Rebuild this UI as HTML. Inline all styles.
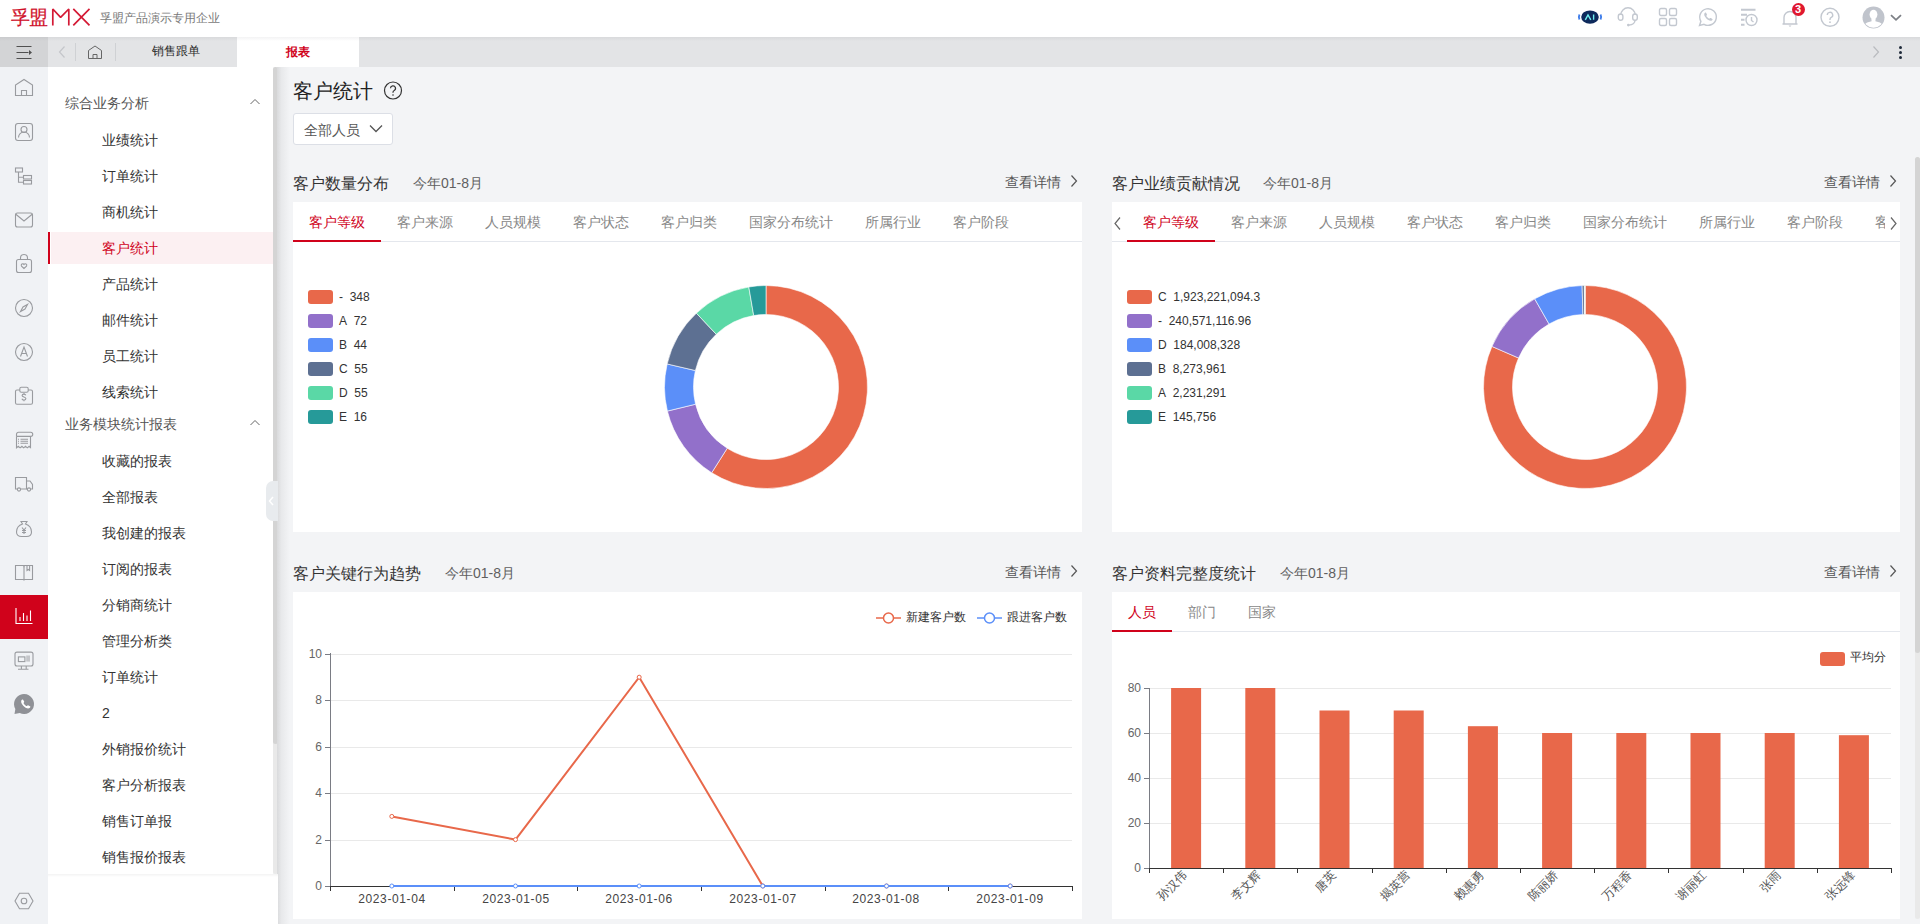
<!DOCTYPE html><html><head><meta charset="utf-8"><style>
*{box-sizing:border-box;margin:0;padding:0}
html,body{width:1920px;height:924px;overflow:hidden}
body{position:relative;background:#f3f4f6;font-family:"Liberation Sans",sans-serif;color:#333;font-size:14px}
.a{position:absolute}
.t{position:absolute;white-space:nowrap;line-height:1}
svg{position:absolute;overflow:visible}
</style></head><body><div class="a" style="left:0px;top:0px;width:1920px;height:37px;background:#fff"></div>
<div class="t" style="left:11px;top:8px;font-size:19px;color:#d0112b;letter-spacing:-1px;-webkit-text-stroke:0.2px #d0112b">孚盟</div>
<svg style="left:50px;top:8px" width="42" height="19" viewBox="0 0 42 19"><path d="M2.8 17.6V1L10.6 9.4L18.8 1V17.6" fill="none" stroke="#d41a35" stroke-width="1.7" stroke-linejoin="bevel"/><path d="M23.3 0.8L39.5 17.4M39.5 0.8L23.3 17.4" fill="none" stroke="#d41a35" stroke-width="1.7"/></svg>
<div class="t" style="left:100px;top:12px;font-size:12px;color:#7a7a7a;">孚盟产品演示专用企业</div>
<svg style="left:1577px;top:9px" width="26" height="16" viewBox="0 0 26 16"><ellipse cx="13" cy="8.1" rx="8.8" ry="6.7" fill="#0e2a5c"/><path d="M2.5 5.5Q1.200 8 2.500 10.500M23.500 5.500Q24.800 8 23.500 10.500" stroke="#3b7bea" stroke-width="1.8" fill="none"/><path d="M8.300 10.800L11 6L13.800 10.800M16.600 5.600V10.800" stroke="#6ff0f0" stroke-width="1.4" fill="none"/></svg>
<svg style="left:1617px;top:6px" width="22" height="22" viewBox="0 0 22 22"><path d="M3.800 9a7.200 7.200 0 0 1 14.400 0" fill="none" stroke="#c3c8d0" stroke-width="1.4"/><rect x="1.300" y="8" width="4.600" height="6.200" rx="2.200" fill="none" stroke="#c3c8d0" stroke-width="1.4"/><rect x="15.700" y="8" width="4.600" height="6.200" rx="2.200" fill="none" stroke="#c3c8d0" stroke-width="1.4"/><path d="M18 14.200q0 4.300-6.300 4.900" fill="none" stroke="#c3c8d0" stroke-width="1.4"/><circle cx="11.300" cy="19.100" r="1.300" fill="#c3c8d0"/></svg>
<svg style="left:1658px;top:7px" width="20" height="20" viewBox="0 0 20 20"><g fill="none" stroke="#c3c8d0" stroke-width="1.4"><rect x="1.5" y="1.5" width="7" height="7" rx="1.5"/><rect x="11.5" y="1.5" width="7" height="7" rx="1.5"/><rect x="1.5" y="11.5" width="7" height="7" rx="1.5"/><rect x="11.5" y="11.5" width="7" height="7" rx="1.5"/></g></svg>
<svg style="left:1698px;top:7px" width="20" height="20" viewBox="0 0 20 20"><path d="M1.5 18.5l1.4-4.2A8.3 8.3 0 1 1 6 17.3z" fill="none" stroke="#c3c8d0" stroke-width="1.4"/><path d="M6.5 6.3c.4-.9 1.1-1 1.5-.5l.9 1.5c.2.4 0 .8-.3 1.1-.4.3-.3.7 0 1.1.6.8 1.3 1.5 2.2 2 .4.2.7.2 1-.2.3-.4.7-.5 1.1-.3l1.4.9c.5.3.4 1-.4 1.5-1 .6-2.3.4-3.6-.4-1.6-1-2.900-2.5-3.700-4-.4-.9-.5-1.900-.1-2.700z" fill="#c3c8d0"/></svg>
<svg style="left:1740px;top:8px" width="19" height="19" viewBox="0 0 19 19"><g stroke="#c3c8d0" stroke-width="1.4" fill="none"><path d="M1 1.800H15.500M1 6.800H7M1 11.800H4.500M1 16.800H4.500" stroke-width="1.9"/><circle cx="11.5" cy="12" r="5.5"/><path d="M11.5 9V12.5L13.5 14"/></g></svg>
<svg style="left:1781px;top:8px" width="19" height="20" viewBox="0 0 19 20"><path d="M3 15.5V9.5a6 6 0 0 1 12 0v6M1.5 16H16.5" fill="none" stroke="#c3c8d0" stroke-width="1.4"/><path d="M7.5 17.5h3l-1.5 1.6z" fill="#c3c8d0"/></svg>
<div class="a" style="left:1791.5px;top:2.5px;width:13px;height:13px;border-radius:7px;background:#e0182f;color:#fff;font-size:11px;line-height:13px;text-align:center;font-weight:bold">3</div>
<svg style="left:1820px;top:7px" width="20" height="20" viewBox="0 0 20 20"><circle cx="10" cy="10.3" r="9" fill="none" stroke="#c3c8d0" stroke-width="1.4"/><path d="M7.3 8a2.7 2.7 0 1 1 4 2.4c-.9.5-1.3 1-1.3 2v.6" fill="none" stroke="#c3c8d0" stroke-width="1.4"/><circle cx="10" cy="15.2" r=".9" fill="#c3c8d0"/></svg>
<svg style="left:1861.5px;top:5.5px" width="23" height="23" viewBox="0 0 23 23"><defs><clipPath id="avc"><circle cx="11.5" cy="11.5" r="10.3"/></clipPath></defs><circle cx="11.5" cy="11.5" r="11" fill="#c0c4cc"/><g clip-path="url(#avc)" fill="#fff"><ellipse cx="11.5" cy="8.6" rx="3.9" ry="4.8"/><path d="M9.300 12.500L9.600 15.300Q4.500 16.300 2 18.500V24H21V18.500Q18.500 16.300 13.400 15.300L13.700 12.500Z"/></g></svg>
<svg style="left:1890px;top:14px" width="12" height="8" viewBox="0 0 12 8"><path d="M1 1.200L6 5.800L11 1.200" fill="none" stroke="#7d8086" stroke-width="1.8"/></svg>
<div class="a" style="left:0px;top:37px;width:1920px;height:30px;background:linear-gradient(#d9dadc,#e3e4e6 4px)"></div>
<div class="a" style="left:0px;top:37px;width:48px;height:30px;background:linear-gradient(#cacbcd,#d3d4d6 4px)"></div>
<svg style="left:15px;top:45px" width="18" height="14" viewBox="0 0 18 14"><path d="M1.5 1.5H16.5M1.5 7.5H13.5M1.5 13.5H16.5" stroke="#505050" stroke-width="1" fill="none"/><path d="M14 5L17 7.5L14 10z" fill="#505050"/></svg>
<svg style="left:58px;top:45px" width="8" height="14" viewBox="0 0 8 14"><path d="M6.5 1.5L1.5 7L6.5 12.5" stroke="#c4c6ca" stroke-width="1.2" fill="none"/></svg>
<div class="a" style="left:75px;top:43px;width:1px;height:18px;background:#cfd1d4"></div>
<svg style="left:87px;top:45px" width="16" height="15" viewBox="0 0 16 15"><path d="M1.5 13.5V5.5L8 1L14.5 5.5V13.5H1.5z" stroke="#666" stroke-width="1" fill="none"/><path d="M6 13.5V9.5H10V13.5" stroke="#666" stroke-width="1" fill="none"/></svg>
<div class="a" style="left:115px;top:43px;width:1px;height:18px;background:#cfd1d4"></div>
<div class="t" style="left:152px;top:45px;font-size:12px;color:#2a2a2a;font-weight:500">销售跟单</div>
<div class="a" style="left:237px;top:37px;width:122px;height:30px;background:linear-gradient(#f3f3f4,#fff 4px)"></div>
<div class="t" style="left:286px;top:46px;font-size:12px;color:#d0021b;font-weight:bold">报表</div>
<svg style="left:1872px;top:45px" width="8" height="14" viewBox="0 0 8 14"><path d="M1.5 1.5L6.5 7L1.5 12.5" stroke="#b9bbbf" stroke-width="1.2" fill="none"/></svg>
<div class="a" style="left:1899px;top:46px;width:3px;height:3px;background:#1f2a3a;border-radius:2px"></div>
<div class="a" style="left:1899px;top:51px;width:3px;height:3px;background:#1f2a3a;border-radius:2px"></div>
<div class="a" style="left:1899px;top:56px;width:3px;height:3px;background:#1f2a3a;border-radius:2px"></div>
<div class="a" style="left:0px;top:67px;width:48px;height:857px;background:#f0f2f5"></div>
<div class="a" style="left:0px;top:595px;width:48px;height:44px;background:#d0021b"></div>
<svg style="left:14px;top:78px" width="20" height="20" viewBox="0 0 20 20"><g fill="none" stroke="#999b9f" stroke-width="1.1"><path d="M1.5 17.5V7L10 1.5L18.5 7V17.5Z"/><path d="M7.5 17.5V12.5H12.5V17.5"/></g></svg>
<svg style="left:14px;top:122px" width="20" height="20" viewBox="0 0 20 20"><g fill="none" stroke="#999b9f" stroke-width="1.1"><rect x="1.5" y="1.5" width="17" height="17" rx="2.5"/><circle cx="10" cy="7.5" r="3"/><path d="M4.5 15.5a5.5 5.5 0 0 1 11 0"/></g></svg>
<svg style="left:14px;top:166px" width="20" height="20" viewBox="0 0 20 20"><g fill="none" stroke="#999b9f" stroke-width="1.1"><rect x="1.5" y="2" width="7" height="4"/><rect x="9.5" y="9.5" width="8" height="3.5"/><rect x="9.5" y="14.5" width="8" height="3.5"/><path d="M4.5 6V16.3H9.5M4.5 11.3H9.5"/></g></svg>
<svg style="left:14px;top:210px" width="20" height="20" viewBox="0 0 20 20"><g fill="none" stroke="#999b9f" stroke-width="1.1"><rect x="1.5" y="3" width="17" height="14" rx="2"/><path d="M1.5 4L10 11L18.5 4"/></g></svg>
<svg style="left:14px;top:254px" width="20" height="20" viewBox="0 0 20 20"><g fill="none" stroke="#999b9f" stroke-width="1.1"><rect x="2.5" y="5.5" width="15" height="13" rx="2"/><path d="M6.5 5.5V4a3.5 3.5 0 0 1 7 0v1.5"/><path d="M10 14.5l-2.5-2.400a1.400 1.400 0 0 1 2.500-1.600a1.400 1.400 0 0 1 2.500 1.600z"/></g></svg>
<svg style="left:14px;top:298px" width="20" height="20" viewBox="0 0 20 20"><g fill="none" stroke="#999b9f" stroke-width="1.1"><circle cx="10" cy="10" r="8.5"/><path d="M13.5 6.5L11 11L6.5 13.5L9 9z"/></g></svg>
<svg style="left:14px;top:342px" width="20" height="20" viewBox="0 0 20 20"><g fill="none" stroke="#999b9f" stroke-width="1.1"><circle cx="10" cy="10" r="8.5"/><path d="M6.5 14.5L10 5L13.5 14.5M7.700 11.500H12.300"/></g></svg>
<svg style="left:14px;top:386px" width="20" height="20" viewBox="0 0 20 20"><g fill="none" stroke="#999b9f" stroke-width="1.1"><rect x="1.5" y="4" width="17" height="14.3" rx="1.5"/><rect x="5.8" y="1.3" width="8.4" height="5" rx="1.5" fill="#f0f2f5"/><path d="M11.800 9.300c-.3-.8-1-1.200-1.900-1.200-1.100 0-1.800.6-1.800 1.400 0 1.800 3.800 1.100 3.800 3.100 0 .9-.8 1.500-1.900 1.500-1 0-1.800-.5-2.100-1.300M10 7V8.200M10 14.100V15.300"/></g></svg>
<svg style="left:14px;top:430px" width="20" height="20" viewBox="0 0 20 20"><g fill="none" stroke="#999b9f" stroke-width="1.1"><path d="M2.500 6.400V17.800L4.300 16.300L6.100 17.800L7.900 16.300L9.700 17.800L11.500 16.300L13.300 17.800L15.100 16.300L16.500 17.500V6.400"/><path d="M2.500 6.400V4.300a2 2 0 0 1 2-2H16.700a2 2 0 0 1 0 4.100H2.500"/><path d="M6.500 9.200H14M6.500 11.200H14M6.500 13.300H14M4 9.200H5M4 11.200H5M4 13.300H5"/></g></svg>
<svg style="left:14px;top:474px" width="20" height="20" viewBox="0 0 20 20"><g fill="none" stroke="#999b9f" stroke-width="1.1"><path d="M1.5 3.5H12.5V15H1.5z"/><path d="M12.5 7H16l2.5 3.5V15H12.5"/><circle cx="5" cy="15.5" r="1.6" fill="#f0f2f5"/><circle cx="15" cy="15.5" r="1.6" fill="#f0f2f5"/></g></svg>
<svg style="left:14px;top:518px" width="20" height="20" viewBox="0 0 20 20"><g fill="none" stroke="#999b9f" stroke-width="1.1"><path d="M7 3.5h6l-1.500 2.500c3.500 1.200 6 4.500 6 8 0 3-2 4.500-5 4.500H7.500C4.500 18.500 2.500 17 2.500 14c0-3.500 2.500-6.800 6-8z"/><path d="M8 9.500L10 12L12 9.500M10 12V16M8 12.500H12M8 14.500H12"/></g></svg>
<svg style="left:14px;top:562px" width="20" height="20" viewBox="0 0 20 20"><g fill="none" stroke="#999b9f" stroke-width="1.1"><path d="M1.500 3.500H9.500L10 4.500L10.500 3.500H18.500V17.500H10.500L10 18L9.500 17.500H1.500z"/><path d="M10 4.500V17.500"/><path d="M13 3.500V8.500L14.300 7.500L15.600 8.500V3.500"/></g></svg>
<svg style="left:14px;top:606px" width="20" height="20" viewBox="0 0 20 20"><g fill="none" stroke="#fff" stroke-width="1.1"><path d="M2 2V17.5H18.5"/><path d="M6 15V11M9.5 15V7M13 15V9.5M16.500 15V4.500"/></g></svg>
<svg style="left:14px;top:650px" width="20" height="20" viewBox="0 0 20 20"><g fill="none" stroke="#999b9f" stroke-width="1.1"><rect x="1" y="2.100" width="18" height="13.900" rx="2"/><rect x="4.400" y="6.900" width="6.500" height="4.700"/><path d="M7.400 16V19M12.200 16V19M4 19.300H14.500"/><rect x="12.200" y="5.500" width="3.800" height="6.100" fill="#c4c5c9" stroke="none"/></g></svg>
<svg style="left:14px;top:694px" width="21" height="21" viewBox="0 0 21 21"><path d="M5.770 19.060A10 10 0 1 0 1.340 15L0.500 20z" fill="#8f9196"/><g transform="translate(0.6 0.4) scale(1.05)"><path d="M6.500 5.500c.5-.8 1.200-.9 1.600-.4l1 1.600c.2.400 0 .8-.3 1.100-.4.300-.3.700 0 1.100.6.800 1.400 1.600 2.300 2.100.4.200.7.200 1-.2.300-.4.700-.5 1.100-.3l1.500.9c.5.300.4 1.100-.4 1.600-1 .6-2.400.4-3.800-.4-1.700-1-3-2.600-3.900-4.200-.4-.9-.5-2-.1-2.800z" fill="#fff"/></g></svg>
<svg style="left:14px;top:891px" width="20" height="20" viewBox="0 0 20 20"><g fill="none" stroke="#999b9f" stroke-width="1.1"><path d="M5.500 2.200H14.500L19 10L14.500 17.800H5.500L1 10z"/><circle cx="10" cy="10" r="2.800"/></g></svg>
<div class="a" style="left:48px;top:67px;width:225px;height:857px;background:#fff"></div>
<div class="a" style="left:273px;top:67px;width:5px;height:807px;background:#e9e9e9;border-radius:3px"></div>
<div class="a" style="left:273px;top:67px;width:5px;height:677px;background:#d4d4d4;border-radius:3px"></div>
<div class="a" style="left:277px;top:67px;width:13px;height:857px;background:linear-gradient(90deg,#d9dadc 0,#e8e9eb 35%,#f3f4f6 100%)"></div>
<div class="a" style="left:48px;top:874px;width:230px;height:50px;background:linear-gradient(#f3f3f3,#fff 3px)"></div>
<div class="a" style="left:51px;top:232px;width:222px;height:32px;background:#fcf0f2"></div>
<div class="a" style="left:48px;top:232px;width:2px;height:32px;background:#d0021b"></div>
<div class="t" style="left:65px;top:96px;font-size:14px;color:#555;">综合业务分析</div>
<svg style="left:249px;top:98px" width="12" height="7" viewBox="0 0 12 7"><path d="M1.5 6L6 1.5L10.5 6" stroke="#666" stroke-width="1" fill="none"/></svg>
<div class="t" style="left:102px;top:133px;font-size:14px;color:#333;">业绩统计</div>
<div class="t" style="left:102px;top:169px;font-size:14px;color:#333;">订单统计</div>
<div class="t" style="left:102px;top:205px;font-size:14px;color:#333;">商机统计</div>
<div class="t" style="left:102px;top:241px;font-size:14px;color:#d0021b;">客户统计</div>
<div class="t" style="left:102px;top:277px;font-size:14px;color:#333;">产品统计</div>
<div class="t" style="left:102px;top:313px;font-size:14px;color:#333;">邮件统计</div>
<div class="t" style="left:102px;top:349px;font-size:14px;color:#333;">员工统计</div>
<div class="t" style="left:102px;top:385px;font-size:14px;color:#333;">线索统计</div>
<div class="t" style="left:65px;top:417px;font-size:14px;color:#555;">业务模块统计报表</div>
<svg style="left:249px;top:419px" width="12" height="7" viewBox="0 0 12 7"><path d="M1.5 6L6 1.5L10.5 6" stroke="#666" stroke-width="1" fill="none"/></svg>
<div class="t" style="left:102px;top:454px;font-size:14px;color:#333;">收藏的报表</div>
<div class="t" style="left:102px;top:490px;font-size:14px;color:#333;">全部报表</div>
<div class="t" style="left:102px;top:526px;font-size:14px;color:#333;">我创建的报表</div>
<div class="t" style="left:102px;top:562px;font-size:14px;color:#333;">订阅的报表</div>
<div class="t" style="left:102px;top:598px;font-size:14px;color:#333;">分销商统计</div>
<div class="t" style="left:102px;top:634px;font-size:14px;color:#333;">管理分析类</div>
<div class="t" style="left:102px;top:670px;font-size:14px;color:#333;">订单统计</div>
<div class="t" style="left:102px;top:706px;font-size:14px;color:#333;">2</div>
<div class="t" style="left:102px;top:742px;font-size:14px;color:#333;">外销报价统计</div>
<div class="t" style="left:102px;top:778px;font-size:14px;color:#333;">客户分析报表</div>
<div class="t" style="left:102px;top:814px;font-size:14px;color:#333;">销售订单报</div>
<div class="t" style="left:102px;top:850px;font-size:14px;color:#333;">销售报价报表</div>
<div class="a" style="left:266px;top:481px;width:12px;height:40px;background:#e8ebee;border-radius:7px 0 0 7px"></div>
<svg style="left:268px;top:496px" width="6" height="10" viewBox="0 0 6 10"><path d="M5 1L1.500 5L5 9" stroke="#fff" stroke-width="1.5" fill="none"/></svg>
<div class="a" style="left:1915px;top:157px;width:5px;height:762px;background:#e9e9e9;border-radius:3px"></div>
<div class="a" style="left:1915px;top:157px;width:5px;height:496px;background:#d4d4d4;border-radius:3px"></div>
<div class="t" style="left:293px;top:81px;font-size:20px;color:#222;">客户统计</div>
<svg style="left:383px;top:81px" width="20" height="20" viewBox="0 0 20 20"><circle cx="10" cy="9.5" r="8.5" fill="none" stroke="#333" stroke-width="1.2"/><path d="M7.500 7.300a2.500 2.500 0 1 1 3.700 2.200c-.8.4-1.200.9-1.200 1.800v.5" fill="none" stroke="#333" stroke-width="1.2"/><circle cx="10" cy="14" r=".8" fill="#333"/></svg>
<div class="a" style="left:293px;top:113px;width:100px;height:32px;background:#fff;border:1px solid #dcdfe6;border-radius:3px"></div>
<div class="t" style="left:304px;top:123px;font-size:14px;color:#555;">全部人员</div>
<svg style="left:369px;top:124px" width="14" height="9" viewBox="0 0 14 9"><path d="M1 1.500L7 7.500L13 1.500" stroke="#555" stroke-width="1.3" fill="none"/></svg>
<div class="t" style="left:293px;top:176px;font-size:16px;color:#333;">客户数量分布</div>
<div class="t" style="left:413px;top:176px;font-size:14px;color:#5f5f5f;">今年01-8月</div>
<div class="t" style="left:1005px;top:175px;font-size:14px;color:#555;">查看详情</div>
<svg style="left:1070px;top:174px" width="8" height="14" viewBox="0 0 8 14"><path d="M1.500 1.500L6.500 7L1.500 12.500" stroke="#555" stroke-width="1.2" fill="none"/></svg>
<div class="t" style="left:1112px;top:176px;font-size:16px;color:#333;">客户业绩贡献情况</div>
<div class="t" style="left:1263px;top:176px;font-size:14px;color:#5f5f5f;">今年01-8月</div>
<div class="t" style="left:1824px;top:175px;font-size:14px;color:#555;">查看详情</div>
<svg style="left:1889px;top:174px" width="8" height="14" viewBox="0 0 8 14"><path d="M1.500 1.500L6.500 7L1.500 12.500" stroke="#555" stroke-width="1.2" fill="none"/></svg>
<div class="t" style="left:293px;top:566px;font-size:16px;color:#333;">客户关键行为趋势</div>
<div class="t" style="left:445px;top:566px;font-size:14px;color:#5f5f5f;">今年01-8月</div>
<div class="t" style="left:1005px;top:565px;font-size:14px;color:#555;">查看详情</div>
<svg style="left:1070px;top:564px" width="8" height="14" viewBox="0 0 8 14"><path d="M1.500 1.500L6.500 7L1.500 12.500" stroke="#555" stroke-width="1.2" fill="none"/></svg>
<div class="t" style="left:1112px;top:566px;font-size:16px;color:#333;">客户资料完整度统计</div>
<div class="t" style="left:1280px;top:566px;font-size:14px;color:#5f5f5f;">今年01-8月</div>
<div class="t" style="left:1824px;top:565px;font-size:14px;color:#555;">查看详情</div>
<svg style="left:1889px;top:564px" width="8" height="14" viewBox="0 0 8 14"><path d="M1.500 1.500L6.500 7L1.500 12.500" stroke="#555" stroke-width="1.2" fill="none"/></svg>
<div class="a" style="left:293px;top:202px;width:789px;height:330px;background:#fff"></div>
<div class="a" style="left:1112px;top:202px;width:788px;height:330px;background:#fff"></div>
<div class="a" style="left:293px;top:592px;width:789px;height:327px;background:#fff"></div>
<div class="a" style="left:1112px;top:592px;width:788px;height:327px;background:#fff"></div>
<div class="a" style="left:293px;top:241px;width:789px;height:1px;background:#e4e7ed"></div>
<div class="t" style="left:309px;top:215px;font-size:14px;color:#d0021b;">客户等级</div>
<div class="a" style="left:293px;top:240px;width:88px;height:2px;background:#d0021b"></div>
<div class="t" style="left:397px;top:215px;font-size:14px;color:#888;">客户来源</div>
<div class="t" style="left:485px;top:215px;font-size:14px;color:#888;">人员规模</div>
<div class="t" style="left:573px;top:215px;font-size:14px;color:#888;">客户状态</div>
<div class="t" style="left:661px;top:215px;font-size:14px;color:#888;">客户归类</div>
<div class="t" style="left:749px;top:215px;font-size:14px;color:#888;">国家分布统计</div>
<div class="t" style="left:865px;top:215px;font-size:14px;color:#888;">所属行业</div>
<div class="t" style="left:953px;top:215px;font-size:14px;color:#888;">客户阶段</div>
<div class="a" style="left:1127px;top:202px;width:758px;height:40px;overflow:hidden">
<div class="t" style="left:16px;top:13px;font-size:14px;color:#d0021b">客户等级</div>
<div class="a" style="left:0px;top:38px;width:88px;height:2px;background:#d0021b"></div>
<div class="t" style="left:104px;top:13px;font-size:14px;color:#888">客户来源</div>
<div class="t" style="left:192px;top:13px;font-size:14px;color:#888">人员规模</div>
<div class="t" style="left:280px;top:13px;font-size:14px;color:#888">客户状态</div>
<div class="t" style="left:368px;top:13px;font-size:14px;color:#888">客户归类</div>
<div class="t" style="left:456px;top:13px;font-size:14px;color:#888">国家分布统计</div>
<div class="t" style="left:572px;top:13px;font-size:14px;color:#888">所属行业</div>
<div class="t" style="left:660px;top:13px;font-size:14px;color:#888">客户阶段</div>
<div class="t" style="left:748px;top:13px;font-size:14px;color:#888">客户类型</div>
</div>
<div class="a" style="left:1112px;top:241px;width:788px;height:1px;background:#e4e7ed"></div>
<div class="a" style="left:1127px;top:240px;width:88px;height:2px;background:#d0021b"></div>
<svg style="left:1113px;top:216px" width="9" height="15" viewBox="0 0 9 15"><path d="M7 1.500L2 7.500L7 13.500" stroke="#666" stroke-width="1.2" fill="none"/></svg>
<svg style="left:1889px;top:216px" width="9" height="15" viewBox="0 0 9 15"><path d="M2 1.500L7 7.500L2 13.500" stroke="#666" stroke-width="1.2" fill="none"/></svg>
<div class="a" style="left:1112px;top:631px;width:788px;height:1px;background:#e4e7ed"></div>
<div class="t" style="left:1128px;top:605px;font-size:14px;color:#d0021b;">人员</div>
<div class="a" style="left:1112px;top:630px;width:60px;height:2px;background:#d0021b"></div>
<div class="t" style="left:1188px;top:605px;font-size:14px;color:#888;">部门</div>
<div class="t" style="left:1248px;top:605px;font-size:14px;color:#888;">国家</div>
<svg style="left:0;top:0" width="1920" height="924"><path d="M766.00 285.50A101.5 101.5 0 1 1 711.70 472.76L727.22 448.26A72.5 72.5 0 1 0 766.00 314.50Z" fill="#e8684a" stroke="#fff" stroke-width="0.6" stroke-linejoin="round"/><path d="M711.70 472.76A101.5 101.5 0 0 1 667.40 411.09L695.57 404.21A72.5 72.5 0 0 0 727.22 448.26Z" fill="#9270ca" stroke="#fff" stroke-width="0.6" stroke-linejoin="round"/><path d="M667.40 411.09A101.5 101.5 0 0 1 667.15 363.96L695.39 370.54A72.5 72.5 0 0 0 695.57 404.21Z" fill="#5b8ff9" stroke="#fff" stroke-width="0.6" stroke-linejoin="round"/><path d="M667.15 363.96A101.5 101.5 0 0 1 696.36 313.16L716.26 334.26A72.5 72.5 0 0 0 695.39 370.54Z" fill="#5d7092" stroke="#fff" stroke-width="0.6" stroke-linejoin="round"/><path d="M696.36 313.16A101.5 101.5 0 0 1 748.79 286.97L753.71 315.55A72.5 72.5 0 0 0 716.26 334.26Z" fill="#5ad8a6" stroke="#fff" stroke-width="0.6" stroke-linejoin="round"/><path d="M748.79 286.97A101.5 101.5 0 0 1 766.00 285.50L766.00 314.50A72.5 72.5 0 0 0 753.71 315.55Z" fill="#269a99" stroke="#fff" stroke-width="0.6" stroke-linejoin="round"/></svg>
<svg style="left:0;top:0" width="1920" height="924"><path d="M1585.00 285.50A101.5 101.5 0 1 1 1491.96 346.42L1518.55 358.01A72.5 72.5 0 1 0 1585.00 314.50Z" fill="#e8684a" stroke="#fff" stroke-width="0.6" stroke-linejoin="round"/><path d="M1491.96 346.42A101.5 101.5 0 0 1 1534.69 298.85L1549.06 324.03A72.5 72.5 0 0 0 1518.55 358.01Z" fill="#9270ca" stroke="#fff" stroke-width="0.6" stroke-linejoin="round"/><path d="M1534.69 298.85A101.5 101.5 0 0 1 1582.12 285.54L1582.94 314.53A72.5 72.5 0 0 0 1549.06 324.03Z" fill="#5b8ff9" stroke="#fff" stroke-width="0.6" stroke-linejoin="round"/><path d="M1582.12 285.54A101.5 101.5 0 0 1 1584.36 285.50L1584.54 314.50A72.5 72.5 0 0 0 1582.94 314.53Z" fill="#5d7092" stroke="#fff" stroke-width="0.6" stroke-linejoin="round"/><path d="M1584.36 285.50A101.5 101.5 0 0 1 1584.96 285.50L1584.97 314.50A72.5 72.5 0 0 0 1584.54 314.50Z" fill="#5ad8a6" stroke="#fff" stroke-width="0.6" stroke-linejoin="round"/><path d="M1584.96 285.50A101.5 101.5 0 0 1 1585.00 285.50L1585.00 314.50A72.5 72.5 0 0 0 1584.97 314.50Z" fill="#269a99" stroke="#fff" stroke-width="0.6" stroke-linejoin="round"/></svg>
<div class="a" style="left:308px;top:290px;width:25px;height:14px;background:#e8684a;border-radius:3px"></div>
<div class="t" style="left:339px;top:291px;font-size:12px;color:#333;">-&nbsp;&nbsp;348</div>
<div class="a" style="left:308px;top:314px;width:25px;height:14px;background:#9270ca;border-radius:3px"></div>
<div class="t" style="left:339px;top:315px;font-size:12px;color:#333;">A&nbsp;&nbsp;72</div>
<div class="a" style="left:308px;top:338px;width:25px;height:14px;background:#5b8ff9;border-radius:3px"></div>
<div class="t" style="left:339px;top:339px;font-size:12px;color:#333;">B&nbsp;&nbsp;44</div>
<div class="a" style="left:308px;top:362px;width:25px;height:14px;background:#5d7092;border-radius:3px"></div>
<div class="t" style="left:339px;top:363px;font-size:12px;color:#333;">C&nbsp;&nbsp;55</div>
<div class="a" style="left:308px;top:386px;width:25px;height:14px;background:#5ad8a6;border-radius:3px"></div>
<div class="t" style="left:339px;top:387px;font-size:12px;color:#333;">D&nbsp;&nbsp;55</div>
<div class="a" style="left:308px;top:410px;width:25px;height:14px;background:#269a99;border-radius:3px"></div>
<div class="t" style="left:339px;top:411px;font-size:12px;color:#333;">E&nbsp;&nbsp;16</div>
<div class="a" style="left:1127px;top:290px;width:25px;height:14px;background:#e8684a;border-radius:3px"></div>
<div class="t" style="left:1158px;top:291px;font-size:12px;color:#333;">C&nbsp;&nbsp;1,923,221,094.3</div>
<div class="a" style="left:1127px;top:314px;width:25px;height:14px;background:#9270ca;border-radius:3px"></div>
<div class="t" style="left:1158px;top:315px;font-size:12px;color:#333;">-&nbsp;&nbsp;240,571,116.96</div>
<div class="a" style="left:1127px;top:338px;width:25px;height:14px;background:#5b8ff9;border-radius:3px"></div>
<div class="t" style="left:1158px;top:339px;font-size:12px;color:#333;">D&nbsp;&nbsp;184,008,328</div>
<div class="a" style="left:1127px;top:362px;width:25px;height:14px;background:#5d7092;border-radius:3px"></div>
<div class="t" style="left:1158px;top:363px;font-size:12px;color:#333;">B&nbsp;&nbsp;8,273,961</div>
<div class="a" style="left:1127px;top:386px;width:25px;height:14px;background:#5ad8a6;border-radius:3px"></div>
<div class="t" style="left:1158px;top:387px;font-size:12px;color:#333;">A&nbsp;&nbsp;2,231,291</div>
<div class="a" style="left:1127px;top:410px;width:25px;height:14px;background:#269a99;border-radius:3px"></div>
<div class="t" style="left:1158px;top:411px;font-size:12px;color:#333;">E&nbsp;&nbsp;145,756</div>
<svg style="left:0;top:0" width="1920" height="924"><path d="M330 840.5H1072" stroke="#e9e9e9" stroke-width="1"/><path d="M330 793.5H1072" stroke="#e9e9e9" stroke-width="1"/><path d="M330 747.5H1072" stroke="#e9e9e9" stroke-width="1"/><path d="M330 700.5H1072" stroke="#e9e9e9" stroke-width="1"/><path d="M330 654.5H1072" stroke="#e9e9e9" stroke-width="1"/><path d="M330.5 653V886" stroke="#7a7c84" stroke-width="1"/><path d="M325 886.5H330" stroke="#7a7c84" stroke-width="1"/><path d="M325 840.5H330" stroke="#7a7c84" stroke-width="1"/><path d="M325 793.5H330" stroke="#7a7c84" stroke-width="1"/><path d="M325 747.5H330" stroke="#7a7c84" stroke-width="1"/><path d="M325 700.5H330" stroke="#7a7c84" stroke-width="1"/><path d="M325 654.5H330" stroke="#7a7c84" stroke-width="1"/><path d="M330 886.5H1072" stroke="#333" stroke-width="1"/><path d="M330.5 886V891" stroke="#333" stroke-width="1"/><path d="M454.5 886V891" stroke="#333" stroke-width="1"/><path d="M577.5 886V891" stroke="#333" stroke-width="1"/><path d="M701.5 886V891" stroke="#333" stroke-width="1"/><path d="M825.5 886V891" stroke="#333" stroke-width="1"/><path d="M948.5 886V891" stroke="#333" stroke-width="1"/><path d="M1072.5 886V891" stroke="#333" stroke-width="1"/><polyline points="391.8,816.4 515.5,839.6 639.2,677.2 762.8,886.0 886.5,886.0 1010.2,886.0" fill="none" stroke="#e8684a" stroke-width="2"/><polyline points="391.8,886 515.5,886 639.2,886 762.8,886 886.5,886 1010.2,886" fill="none" stroke="#5b8ff9" stroke-width="2"/><circle cx="391.8" cy="816.4" r="2" fill="#fff" stroke="#e8684a" stroke-width="1"/><circle cx="515.5" cy="839.6" r="2" fill="#fff" stroke="#e8684a" stroke-width="1"/><circle cx="639.2" cy="677.2" r="2" fill="#fff" stroke="#e8684a" stroke-width="1"/><circle cx="762.8" cy="886.0" r="2" fill="#fff" stroke="#e8684a" stroke-width="1"/><circle cx="886.5" cy="886.0" r="2" fill="#fff" stroke="#e8684a" stroke-width="1"/><circle cx="1010.2" cy="886.0" r="2" fill="#fff" stroke="#e8684a" stroke-width="1"/><circle cx="391.8" cy="886" r="2" fill="#fff" stroke="#5b8ff9" stroke-width="1"/><circle cx="515.5" cy="886" r="2" fill="#fff" stroke="#5b8ff9" stroke-width="1"/><circle cx="639.2" cy="886" r="2" fill="#fff" stroke="#5b8ff9" stroke-width="1"/><circle cx="762.8" cy="886" r="2" fill="#fff" stroke="#5b8ff9" stroke-width="1"/><circle cx="886.5" cy="886" r="2" fill="#fff" stroke="#5b8ff9" stroke-width="1"/><circle cx="1010.2" cy="886" r="2" fill="#fff" stroke="#5b8ff9" stroke-width="1"/></svg>
<div class="t" style="left:270px;top:880px;width:52px;text-align:right;font-size:12px;color:#666">0</div>
<div class="t" style="left:270px;top:834px;width:52px;text-align:right;font-size:12px;color:#666">2</div>
<div class="t" style="left:270px;top:787px;width:52px;text-align:right;font-size:12px;color:#666">4</div>
<div class="t" style="left:270px;top:741px;width:52px;text-align:right;font-size:12px;color:#666">6</div>
<div class="t" style="left:270px;top:694px;width:52px;text-align:right;font-size:12px;color:#666">8</div>
<div class="t" style="left:270px;top:648px;width:52px;text-align:right;font-size:12px;color:#666">10</div>
<div class="t" style="left:352px;top:893px;width:80px;text-align:center;font-size:12px;letter-spacing:0.6px;color:#444">2023-01-04</div>
<div class="t" style="left:476px;top:893px;width:80px;text-align:center;font-size:12px;letter-spacing:0.6px;color:#444">2023-01-05</div>
<div class="t" style="left:599px;top:893px;width:80px;text-align:center;font-size:12px;letter-spacing:0.6px;color:#444">2023-01-06</div>
<div class="t" style="left:723px;top:893px;width:80px;text-align:center;font-size:12px;letter-spacing:0.6px;color:#444">2023-01-07</div>
<div class="t" style="left:846px;top:893px;width:80px;text-align:center;font-size:12px;letter-spacing:0.6px;color:#444">2023-01-08</div>
<div class="t" style="left:970px;top:893px;width:80px;text-align:center;font-size:12px;letter-spacing:0.6px;color:#444">2023-01-09</div>
<svg style="left:876px;top:611px" width="200" height="14" viewBox="0 0 200 14"><path d="M0 7H25" stroke="#e8684a" stroke-width="1.5"/><circle cx="12.5" cy="7" r="5" fill="#fff" stroke="#e8684a" stroke-width="1.5"/><path d="M101 7H126" stroke="#5b8ff9" stroke-width="1.5"/><circle cx="113.5" cy="7" r="5" fill="#fff" stroke="#5b8ff9" stroke-width="1.5"/></svg>
<div class="t" style="left:906px;top:611px;font-size:12px;color:#333;">新建客户数</div>
<div class="t" style="left:1007px;top:611px;font-size:12px;color:#333;">跟进客户数</div>
<svg style="left:0;top:0" width="1920" height="924"><path d="M1149 823.5H1891" stroke="#e9e9e9" stroke-width="1"/><path d="M1149 778.5H1891" stroke="#e9e9e9" stroke-width="1"/><path d="M1149 733.5H1891" stroke="#e9e9e9" stroke-width="1"/><path d="M1149 688.5H1891" stroke="#e9e9e9" stroke-width="1"/><path d="M1149.5 688V868" stroke="#7a7c84" stroke-width="1"/><path d="M1144 868.5H1149" stroke="#7a7c84" stroke-width="1"/><path d="M1144 823.5H1149" stroke="#7a7c84" stroke-width="1"/><path d="M1144 778.5H1149" stroke="#7a7c84" stroke-width="1"/><path d="M1144 733.5H1149" stroke="#7a7c84" stroke-width="1"/><path d="M1144 688.5H1149" stroke="#7a7c84" stroke-width="1"/><path d="M1149 868.5H1891" stroke="#333" stroke-width="1"/><path d="M1149.5 868V873" stroke="#333" stroke-width="1"/><path d="M1223.5 868V873" stroke="#333" stroke-width="1"/><path d="M1297.5 868V873" stroke="#333" stroke-width="1"/><path d="M1372.5 868V873" stroke="#333" stroke-width="1"/><path d="M1446.5 868V873" stroke="#333" stroke-width="1"/><path d="M1520.5 868V873" stroke="#333" stroke-width="1"/><path d="M1594.5 868V873" stroke="#333" stroke-width="1"/><path d="M1668.5 868V873" stroke="#333" stroke-width="1"/><path d="M1743.5 868V873" stroke="#333" stroke-width="1"/><path d="M1817.5 868V873" stroke="#333" stroke-width="1"/><path d="M1891.5 868V873" stroke="#333" stroke-width="1"/><rect x="1171.1" y="688.0" width="30" height="180.0" fill="#e8684a"/><rect x="1245.3" y="688.0" width="30" height="180.0" fill="#e8684a"/><rect x="1319.5" y="710.5" width="30" height="157.5" fill="#e8684a"/><rect x="1393.7" y="710.5" width="30" height="157.5" fill="#e8684a"/><rect x="1467.9" y="726.2" width="30" height="141.8" fill="#e8684a"/><rect x="1542.1" y="733.0" width="30" height="135.0" fill="#e8684a"/><rect x="1616.3" y="733.0" width="30" height="135.0" fill="#e8684a"/><rect x="1690.5" y="733.0" width="30" height="135.0" fill="#e8684a"/><rect x="1764.7" y="733.0" width="30" height="135.0" fill="#e8684a"/><rect x="1838.9" y="735.2" width="30" height="132.8" fill="#e8684a"/></svg>
<div class="t" style="left:1089px;top:862px;width:52px;text-align:right;font-size:12px;color:#666">0</div>
<div class="t" style="left:1089px;top:817px;width:52px;text-align:right;font-size:12px;color:#666">20</div>
<div class="t" style="left:1089px;top:772px;width:52px;text-align:right;font-size:12px;color:#666">40</div>
<div class="t" style="left:1089px;top:727px;width:52px;text-align:right;font-size:12px;color:#666">60</div>
<div class="t" style="left:1089px;top:682px;width:52px;text-align:right;font-size:12px;color:#666">80</div>
<div class="t" style="left:1125px;top:867px;width:60px;text-align:right;font-size:12px;color:#555;transform-origin:100% 50%;transform:rotate(-45deg)">孙汉伟</div>
<div class="t" style="left:1199px;top:867px;width:60px;text-align:right;font-size:12px;color:#555;transform-origin:100% 50%;transform:rotate(-45deg)">李文辉</div>
<div class="t" style="left:1274px;top:867px;width:60px;text-align:right;font-size:12px;color:#555;transform-origin:100% 50%;transform:rotate(-45deg)">唐英</div>
<div class="t" style="left:1348px;top:867px;width:60px;text-align:right;font-size:12px;color:#555;transform-origin:100% 50%;transform:rotate(-45deg)">揭英营</div>
<div class="t" style="left:1422px;top:867px;width:60px;text-align:right;font-size:12px;color:#555;transform-origin:100% 50%;transform:rotate(-45deg)">赖惠勇</div>
<div class="t" style="left:1496px;top:867px;width:60px;text-align:right;font-size:12px;color:#555;transform-origin:100% 50%;transform:rotate(-45deg)">陈丽娇</div>
<div class="t" style="left:1570px;top:867px;width:60px;text-align:right;font-size:12px;color:#555;transform-origin:100% 50%;transform:rotate(-45deg)">万程香</div>
<div class="t" style="left:1644px;top:867px;width:60px;text-align:right;font-size:12px;color:#555;transform-origin:100% 50%;transform:rotate(-45deg)">谢丽虹</div>
<div class="t" style="left:1719px;top:867px;width:60px;text-align:right;font-size:12px;color:#555;transform-origin:100% 50%;transform:rotate(-45deg)">张雨</div>
<div class="t" style="left:1793px;top:867px;width:60px;text-align:right;font-size:12px;color:#555;transform-origin:100% 50%;transform:rotate(-45deg)">张远锋</div>
<div class="a" style="left:1820px;top:652px;width:25px;height:14px;background:#e8684a;border-radius:3px"></div>
<div class="t" style="left:1850px;top:651px;font-size:12px;color:#333;">平均分</div></body></html>
